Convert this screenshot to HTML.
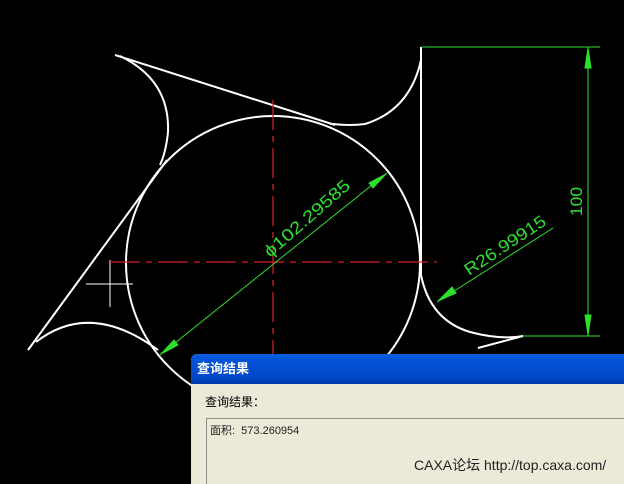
<!DOCTYPE html>
<html><head><meta charset="utf-8"><style>
body{margin:0;width:624px;height:478px;background:#000;overflow:hidden;position:relative;font-family:"Liberation Sans","Noto Sans CJK SC",sans-serif}
svg{position:absolute;left:0;top:0}
#dlg{position:absolute;left:191px;top:354px;width:440px;height:130px;background:#ece9d8;border-radius:6px 6px 0 0;overflow:hidden}
#tb{height:30px;background:linear-gradient(#0a5fe0,#0453d8 20%,#0148c8 80%,#0038a8);color:#fff;font-weight:bold;font-size:13px;line-height:30px;padding-left:6px}
#lbl{position:absolute;left:14px;top:39px;font-size:12px;color:#000}
#box{position:absolute;left:15px;top:64px;width:430px;height:80px;border-top:1px solid #8f8f8f;border-left:1px solid #8f8f8f;background:#ece9d8}
#val{position:absolute;left:3px;top:3px;font-size:11px;color:#222}
#wm{position:absolute;left:414px;top:455px;font-size:14px;color:#222}
</style></head><body>
<svg width="624" height="478" viewBox="0 0 624 478">
<g stroke="#fff" stroke-width="2" fill="none">
<circle cx="273" cy="263" r="147"/>
<line x1="115" y1="55" x2="335" y2="125"/>
<path d="M120 56 Q170 80 168 132 Q166 152 160 165"/>
<line x1="28" y1="350" x2="167" y2="160"/>
<path d="M36 342 Q90 300 158 350"/>
<path d="M333 124 Q350 126 365 124 Q410 110 421 60"/>
<line x1="421" y1="47" x2="421" y2="275"/>
<path d="M421 275 Q430 320 470 332 Q500 340 523 336"/>
<line x1="478" y1="348" x2="523" y2="336"/>
</g>
<g stroke="#fff" stroke-width="1"><line x1="86" y1="284" x2="133" y2="284"/><line x1="110" y1="260" x2="110" y2="307"/></g>
<g stroke="#d02020" stroke-width="1.3" stroke-dasharray="30,6,6,6">
<line x1="110" y1="262" x2="437" y2="262"/>
<line x1="273" y1="100" x2="273" y2="360"/>
</g>
<g stroke="#2ee02e" stroke-width="1" fill="#2ee02e">
<line x1="421" y1="47" x2="600" y2="47"/>
<line x1="523" y1="336" x2="600" y2="336"/>
<line x1="588" y1="47" x2="588" y2="336"/>
<polygon points="588,48 585,68 591,68"/>
<polygon points="588,335 585,315 591,315"/>
<line x1="387" y1="173" x2="160" y2="355"/>
<polygon points="386,174 369,183 373,188"/>
<polygon points="161,354 174,340 178,345"/>
<line x1="553" y1="228" x2="437" y2="302"/>
<polygon points="438,301 452,287 456,293"/>
</g>
<g fill="#2ee02e" font-family="Liberation Sans Narrow,Liberation Sans,sans-serif" font-size="17">
<text transform="translate(270,258) rotate(-41)" textLength="108" lengthAdjust="spacingAndGlyphs">ϕ102.29585</text>
<text transform="translate(469,276) rotate(-33.5)" textLength="94" lengthAdjust="spacingAndGlyphs">R26.99915</text>
<text transform="translate(582,216) rotate(-90)" textLength="29" lengthAdjust="spacingAndGlyphs">100</text>
</g>
</svg>
<div id="dlg"><div id="tb">查询结果</div><div id="lbl">查询结果：</div><div id="box"><div id="val">面积:&nbsp; 573.260954</div></div></div>
<div id="wm">CAXA论坛 http://top.caxa.com/</div>
</body></html>
